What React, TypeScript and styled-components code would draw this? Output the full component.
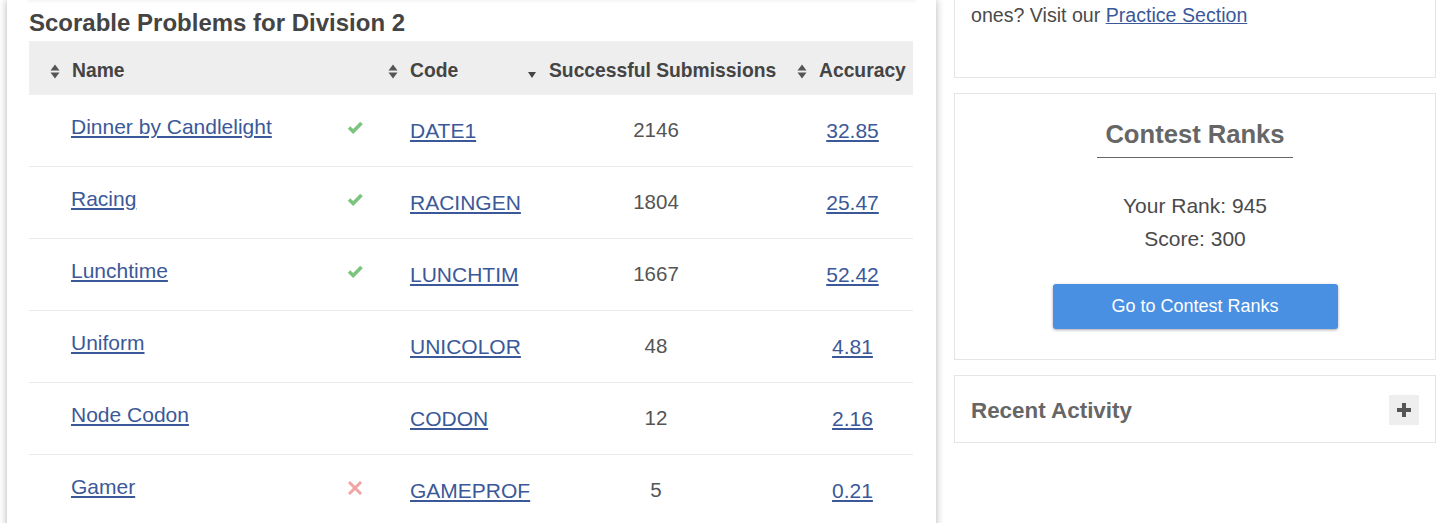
import React from 'react';
import styled, { createGlobalStyle } from 'styled-components';

const GlobalStyle = createGlobalStyle`
  html, body { margin: 0; padding: 0; background: #fff; }
  body { font-family: "Liberation Sans", Arial, sans-serif; overflow: hidden; }
`;

const COLS = '301px 50px 140px 272px 121px';

const Page = styled.div`
  display: flex;
  align-items: flex-start;
  gap: 18px;
  padding-left: 7px;
  width: 1449px;
  height: 523px;
  overflow: hidden;
  box-sizing: border-box;
`;

const MainCard = styled.section`
  width: 929px;
  flex-shrink: 0;
  box-sizing: border-box;
  padding: 0 23px 0 22px;
  min-height: 600px;
  background: #fff;
  box-shadow: 0 0 8px rgba(0, 0, 0, 0.3);
`;

const PrevEdge = styled.div`
  height: 1px;
  margin: -1px -2px 0;
  background: #fff;
  box-shadow: 0 1px 3px rgba(0, 0, 0, 0.12);
`;

const Title = styled.h2`
  margin: 8px 0 4px;
  font-size: 24px;
  line-height: 29px;
  font-weight: bold;
  color: #444;
`;

const HeaderRow = styled.div`
  display: grid;
  grid-template-columns: ${COLS};
  height: 54px;
  box-sizing: border-box;
  padding-top: 6px;
  align-items: center;
  background: #eee;
`;

const HeaderCell = styled.div<{ $left: number; $span?: number }>`
  display: flex;
  align-items: center;
  gap: 12px;
  grid-column: span ${(p) => p.$span ?? 1};
  padding-left: ${(p) => p.$left}px;
  font-size: 19.3px;
  font-weight: bold;
  color: #444;
  white-space: nowrap;
`;

const SortDown = styled.svg`
  flex-shrink: 0;
  margin-top: 7px;
  margin-right: 1px;
`;

const Row = styled.div`
  display: grid;
  grid-template-columns: ${COLS};
  height: 72px;
  box-sizing: border-box;
  border-bottom: 1px solid #e9e9e9;
  align-items: start;
`;

const Cell = styled.div<{ $top: number; $left?: number; $align?: string }>`
  padding-top: ${(p) => p.$top}px;
  padding-left: ${(p) => p.$left ?? 0}px;
  text-align: ${(p) => p.$align ?? 'left'};
  font-size: 21px;
  line-height: 24px;
  color: #555;
`;

const NumberCell = styled(Cell)`
  font-size: 20.5px;
`;

const IconCell = styled.div`
  display: flex;
  justify-content: center;
  padding-top: 26px;
`;

const Link = styled.a`
  color: #3b5998;
  text-decoration: underline;
  cursor: pointer;
`;

const RightCol = styled.aside`
  width: 482px;
  flex-shrink: 0;
  display: flex;
  flex-direction: column;
  gap: 15px;
  margin-top: -1px;
`;

const SideCard = styled.div<{ $pad: string }>`
  box-sizing: border-box;
  border: 1px solid #e5e5e5;
  background: #fff;
  padding: ${(p) => p.$pad};
`;

const InfoText = styled.p`
  margin: 0;
  font-size: 19.6px;
  line-height: 24px;
  color: #4a4a4a;
`;

const RanksBody = styled.div`
  display: flex;
  flex-direction: column;
  align-items: center;
`;

const RanksHeading = styled.h3`
  margin: 0;
  padding: 0 8px 8px;
  border-bottom: 1px solid #666;
  font-size: 25.6px;
  line-height: 30px;
  font-weight: bold;
  color: #666;
`;

const Stats = styled.div`
  margin-top: 31px;
  text-align: center;
  font-size: 21px;
  line-height: 33px;
  color: #4a4a4a;
`;

const PrimaryButton = styled.button`
  margin-top: 29px;
  width: 285px;
  height: 45px;
  border: none;
  border-radius: 3px;
  background: #4a90e2;
  color: #fff;
  font-family: "Liberation Sans", Arial, sans-serif;
  font-size: 18px;
  box-shadow: 0 1px 3px rgba(0, 0, 0, 0.35);
  cursor: pointer;
`;

const ActivityBar = styled.div`
  display: flex;
  align-items: center;
  justify-content: space-between;
`;

const ActivityTitle = styled.h3`
  margin: 0;
  padding-top: 3px;
  font-size: 22.4px;
  line-height: 30px;
  font-weight: bold;
  color: #666;
`;

const PlusButton = styled.button`
  width: 30px;
  height: 30px;
  padding: 0;
  border: none;
  background: #eee;
  display: flex;
  align-items: center;
  justify-content: center;
  cursor: pointer;
`;

const SortIcon = () => (
  <svg width="10" height="15" viewBox="0 0 10 15" style={{ flexShrink: 0 }}>
    <polygon points="0.5,6.5 5,0.5 9.5,6.5" fill="#555" />
    <polygon points="0.5,8.5 5,14.5 9.5,8.5" fill="#555" />
  </svg>
);

const Check = () => (
  <svg width="16" height="13" viewBox="0 0 16 13">
    <polyline points="2,6.5 6.2,10.5 14.5,2" fill="none" stroke="#7dc47f" strokeWidth="3.6" />
  </svg>
);

const Cross = () => (
  <svg width="14" height="14" viewBox="0 0 14 14">
    <path d="M2 2 L12 12 M12 2 L2 12" stroke="#f2a4a4" strokeWidth="3" strokeLinecap="square" fill="none" />
  </svg>
);

type Status = 'ok' | 'fail' | null;

const problems: { name: string; status: Status; code: string; subs: number; acc: string }[] = [
  { name: 'Dinner by Candlelight', status: 'ok', code: 'DATE1', subs: 2146, acc: '32.85' },
  { name: 'Racing', status: 'ok', code: 'RACINGEN', subs: 1804, acc: '25.47' },
  { name: 'Lunchtime', status: 'ok', code: 'LUNCHTIM', subs: 1667, acc: '52.42' },
  { name: 'Uniform', status: null, code: 'UNICOLOR', subs: 48, acc: '4.81' },
  { name: 'Node Codon', status: null, code: 'CODON', subs: 12, acc: '2.16' },
  { name: 'Gamer', status: 'fail', code: 'GAMEPROF', subs: 5, acc: '0.21' },
];

export default function App() {
  return (
    <>
      <GlobalStyle />
      <Page>
        <MainCard>
          <PrevEdge />
          <Title>Scorable Problems for Division 2</Title>
          <HeaderRow>
            <HeaderCell $left={21} $span={2}>
              <SortIcon />
              Name
            </HeaderCell>
            <HeaderCell $left={8}>
              <SortIcon />
              Code
            </HeaderCell>
            <HeaderCell $left={8}>
              <SortDown width="8" height="6" viewBox="0 0 8 6">
                <polygon points="0,0 8,0 4,6" fill="#444" />
              </SortDown>
              Successful Submissions
            </HeaderCell>
            <HeaderCell $left={5}>
              <SortIcon />
              Accuracy
            </HeaderCell>
          </HeaderRow>
          {problems.map((p) => (
            <Row key={p.code}>
              <Cell $top={20} $left={42}>
                <Link>{p.name}</Link>
              </Cell>
              <IconCell>
                {p.status === 'ok' && <Check />}
                {p.status === 'fail' && <Cross />}
              </IconCell>
              <Cell $top={24} $left={30}>
                <Link>{p.code}</Link>
              </Cell>
              <NumberCell $top={23} $align="center">
                {p.subs}
              </NumberCell>
              <Cell $top={24} $align="center">
                <Link>{p.acc}</Link>
              </Cell>
            </Row>
          ))}
        </MainCard>
        <RightCol>
          <SideCard $pad="3px 16px 50px">
            <InfoText>
              ones? Visit our <Link>Practice Section</Link>
            </InfoText>
          </SideCard>
          <SideCard $pad="25px 16px 30px">
            <RanksBody>
              <RanksHeading>Contest Ranks</RanksHeading>
              <Stats>
                <div>Your Rank: 945</div>
                <div>Score: 300</div>
              </Stats>
              <PrimaryButton>Go to Contest Ranks</PrimaryButton>
            </RanksBody>
          </SideCard>
          <SideCard $pad="17px 16px 16px">
            <ActivityBar>
              <ActivityTitle>Recent Activity</ActivityTitle>
              <PlusButton aria-label="Expand">
                <svg width="14" height="14" viewBox="0 0 14 14">
                  <rect x="0" y="5" width="14" height="4" fill="#555" />
                  <rect x="5" y="0" width="4" height="14" fill="#555" />
                </svg>
              </PlusButton>
            </ActivityBar>
          </SideCard>
        </RightCol>
      </Page>
    </>
  );
}
